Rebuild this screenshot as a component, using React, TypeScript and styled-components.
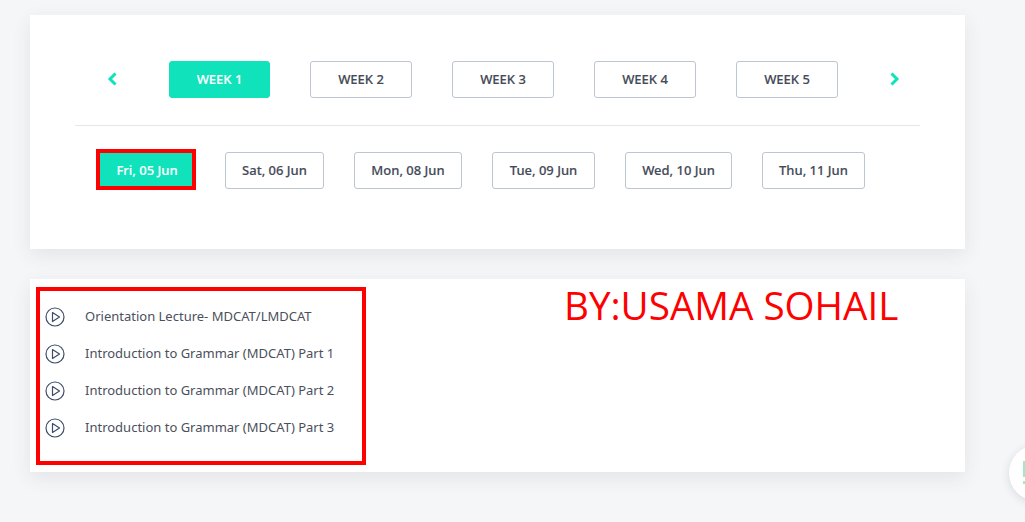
import React from "react";
import styled, { createGlobalStyle } from "styled-components";

const Global = createGlobalStyle`
  html, body { margin: 0; padding: 0; background: #f5f6f8; }
  body { font-family: "Noto Sans", "Open Sans", sans-serif; overflow: hidden; }
`;

const Page = styled.div`
  width: 1025px;
  height: 522px;
  padding: 15px 60px 0 30px;
  box-sizing: border-box;
  position: relative;
  overflow: hidden;
  display: flex;
  flex-direction: column;
  gap: 30px;
`;

const Card = styled.section<{ $height: number }>`
  background: #fff;
  height: ${(p) => p.$height}px;
  box-shadow: 0 6px 18px rgba(40, 50, 70, 0.09);
  position: relative;
  box-sizing: border-box;
`;

const ScheduleCard = styled(Card)`
  padding: 46px 45px 0 44px;
  display: flex;
  flex-direction: column;
`;

const WeekRow = styled.div`
  display: flex;
  align-items: center;
  height: 37px;
  padding-left: 31px;
`;

const Arrow = styled.button<{ $right?: boolean }>`
  width: 14px;
  height: 18px;
  padding: 0 0 2px;
  border: 0;
  background: none;
  display: flex;
  align-items: center;
  justify-content: center;
  margin: ${(p) => (p.$right ? "0 0 0 49px" : "0 50px 0 0")};
`;

const Weeks = styled.div`
  display: flex;
  gap: 40px;
`;

const Pill = styled.button<{ $active?: boolean; $width: number; $nudge?: number }>`
  box-sizing: border-box;
  width: ${(p) => p.$width}px;
  height: 37px;
  padding: 0 0 2px ${(p) => p.$nudge ?? 0}px;
  border-radius: 3px;
  border: 1px solid ${(p) => (p.$active ? "#10e2bb" : "#bcc5d0")};
  background: ${(p) => (p.$active ? "#10e2bb" : "#fff")};
  color: ${(p) => (p.$active ? "#fff" : "#444a58")};
  font-family: "Noto Sans", "Open Sans", sans-serif;
  font-size: 13px;
  font-weight: 500;
  -webkit-text-stroke: 0.15px currentColor;
  text-align: center;
  white-space: nowrap;
`;

const Divider = styled.hr`
  margin: 27px 0 26px 1px;
  border: 0;
  height: 1px;
  background: #e4e7ea;
`;

const DayRow = styled.div`
  display: flex;
  padding-left: 25px;
  gap: 30px;
`;

const FirstDay = styled.div`
  margin-right: 2px;
  position: relative;
`;

const DayMark = styled.span`
  position: absolute;
  left: -3px;
  top: -3px;
  width: 100px;
  height: 41px;
  box-sizing: border-box;
  border: 4px solid #fe0000;
`;

const LessonCard = styled(Card)`
  padding: 19px 15px 0;
`;

const Lessons = styled.ul`
  list-style: none;
  margin: 0;
  padding: 0;
  display: flex;
  flex-direction: column;
`;

const Lesson = styled.li`
  height: 37px;
  display: flex;
  align-items: center;
  gap: 20px;
  color: #4b505c;
  font-size: 13px;
  white-space: nowrap;
`;

const LessonTitle = styled.span`
  padding-bottom: 2px;
`;

const LessonMark = styled.span`
  position: absolute;
  left: 6px;
  top: 8px;
  width: 330px;
  height: 178px;
  box-sizing: border-box;
  border: 4px solid #fe0000;
`;

const Signature = styled.span`
  position: absolute;
  left: 534px;
  top: 0;
  color: #fe0000;
  font-family: "Open Sans", sans-serif;
  font-size: 38.6px;
  line-height: 52px;
  white-space: nowrap;
`;

const Floating = styled.div`
  position: absolute;
  left: 1009px;
  top: 445px;
  width: 56px;
  height: 56px;
  border-radius: 50%;
  background: #fff;
  box-shadow: 0 2px 10px rgba(40, 50, 70, 0.14);
  display: flex;
  align-items: center;
  padding-left: 14px;
  box-sizing: border-box;
`;

const Chevron = ({ right }: { right?: boolean }) => (
  <svg width="11" height="14" viewBox="0 0 11 14">
    <path
      d={right ? "M2.5 1.5 L8 7 L2.5 12.5" : "M8.5 1.5 L3 7 L8.5 12.5"}
      fill="none"
      stroke="#10e2bb"
      strokeWidth="3"
    />
  </svg>
);

const PlayIcon = () => (
  <svg width="20" height="20" viewBox="0 0 20 20">
    <circle cx="10" cy="10" r="9" fill="none" stroke="#3d4e6b" strokeWidth="1.2" />
    <path d="M7.5 5.5 L14.5 10 L7.5 14.5 Z" fill="none" stroke="#3d4e6b" strokeWidth="1.2" strokeLinejoin="round" />
  </svg>
);

const weeks = [
  { label: "WEEK 1", width: 101, active: true },
  { label: "WEEK 2", width: 102 },
  { label: "WEEK 3", width: 102 },
  { label: "WEEK 4", width: 102 },
  { label: "WEEK 5", width: 102 },
];

const days = [
  { label: "Sat, 06 Jun", width: 99 },
  { label: "Mon, 08 Jun", width: 108 },
  { label: "Tue, 09 Jun", width: 103 },
  { label: "Wed, 10 Jun", width: 107 },
  { label: "Thu, 11 Jun", width: 103 },
];

const lessons = [
  "Orientation Lecture- MDCAT/LMDCAT",
  "Introduction to Grammar (MDCAT) Part 1",
  "Introduction to Grammar (MDCAT) Part 2",
  "Introduction to Grammar (MDCAT) Part 3",
];

export default function App() {
  return (
    <Page>
      <Global />
      <ScheduleCard $height={234}>
        <WeekRow>
          <Arrow aria-label="Previous">
            <Chevron />
          </Arrow>
          <Weeks>
            {weeks.map((w) => (
              <Pill key={w.label} $active={w.active} $width={w.width}>
                {w.label}
              </Pill>
            ))}
          </Weeks>
          <Arrow $right aria-label="Next">
            <Chevron right />
          </Arrow>
        </WeekRow>
        <Divider />
        <DayRow>
          <FirstDay>
            <Pill $active $width={94} $nudge={2}>
              Fri, 05 Jun
            </Pill>
            <DayMark />
          </FirstDay>
          {days.map((d) => (
            <Pill key={d.label} $width={d.width}>
              {d.label}
            </Pill>
          ))}
        </DayRow>
      </ScheduleCard>
      <LessonCard $height={193}>
        <Lessons>
          {lessons.map((l) => (
            <Lesson key={l}>
              <PlayIcon />
              <LessonTitle>{l}</LessonTitle>
            </Lesson>
          ))}
        </Lessons>
        <LessonMark />
        <Signature>BY:USAMA SOHAIL</Signature>
      </LessonCard>
      <Floating>
        <svg width="4" height="24" viewBox="0 0 4 24">
          <path d="M0 0 H3 V16 H0 Z" fill="#9dedc0" />
          <path d="M0 20 H3 V23 H0 Z" fill="#9dedc0" />
        </svg>
      </Floating>
    </Page>
  );
}
